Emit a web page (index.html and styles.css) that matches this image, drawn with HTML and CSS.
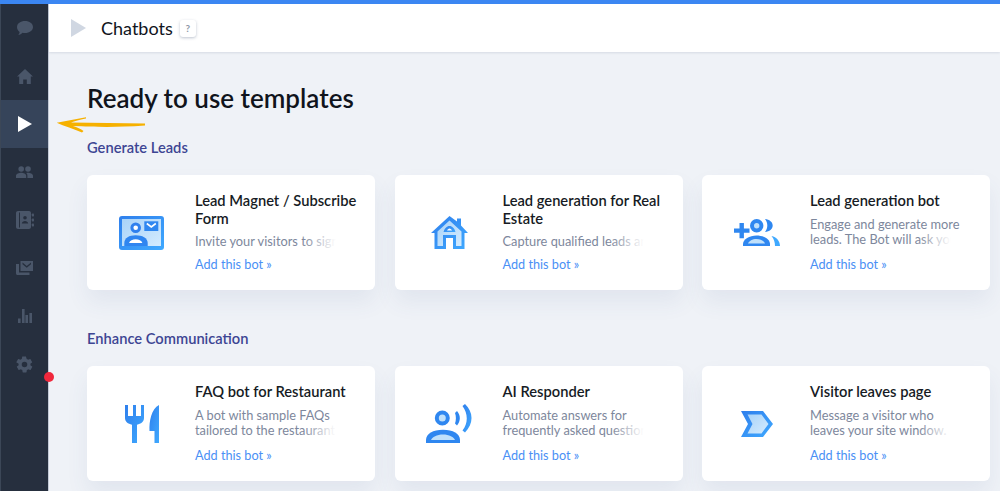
FILE: index.html
```html
<!DOCTYPE html>
<html lang="en">
<head>
    <meta charset="UTF-8">
    <meta name="viewport" content="width=device-width, initial-scale=1.0">
    <title>Chatbots</title>
    <link rel="stylesheet" href="styles.css">
</head>
<body>
    <svg width="0" height="0" class="defs">
        <defs>
            <linearGradient id="blue" x1="0" y1="0" x2="1" y2="1">
                <stop offset="0" stop-color="#2f7fec"/>
                <stop offset="1" stop-color="#3fa9ff"/>
            </linearGradient>
            <linearGradient id="pale" x1="0" y1="0" x2="1" y2="1">
                <stop offset="0" stop-color="#a9d3f8"/>
                <stop offset="1" stop-color="#d3ebff"/>
            </linearGradient>
        </defs>
    </svg>

    <div class="app">
        <nav class="sidebar">
            <a class="nav-item">
                <svg width="16" height="14" viewBox="0 0 16 14"><path d="M8 0c4.400 0 8 2.500 8 6s-3.600 6-8 6c-.9 0-1.700-.1-2.500-.3C4.500 12.800 3 13.700 1.200 14c.7-.8 1.300-1.900 1.400-3.100C1 9.800 0 8 0 6c0-3.500 3.600-6 8-6z"/></svg>
            </a>
            <a class="nav-item">
                <svg width="16" height="15" viewBox="0 0 16 15"><path d="M8 0l8 7.400h-2.200V15H9.800v-4.600H6.200V15H2.200V7.400H0z"/></svg>
            </a>
            <a class="nav-item active">
                <svg width="14" height="16" viewBox="0 0 14 16"><path d="M0 0l14 8L0 16z"/></svg>
            </a>
            <a class="nav-item">
                <svg width="17" height="12" viewBox="0 0 17 12"><circle cx="5.200" cy="3" r="2.800"/><circle cx="12" cy="3" r="2.800"/><path d="M0 12V9.800C0 7.800 3 6.800 5.200 6.800s5 1 5 3V12zM11.400 12V9.400c0-1-.4-1.900-1.200-2.500.6-.1 1.200-.2 1.800-.2 2.100 0 5 1 5 3V12z"/></svg>
            </a>
            <a class="nav-item">
                <svg width="18" height="18" viewBox="0 0 18 18"><path fill-rule="evenodd" d="M2 0h11c1.100 0 2 .9 2 2v14c0 1.100-.9 2-2 2H2c-1.100 0-2-.9-2-2V2C0 .9.900 0 2 0zm1 1.500v15h1v-15zM9 5a1.800 1.800 0 100 3.600A1.800 1.800 0 009 5zm-3.200 7.500h6.400c0-1.500-1.900-2.400-3.200-2.400s-3.200.9-3.200 2.400z"/><rect x="15.800" y="2.500" width="2.200" height="3" rx=".8"/><rect x="15.800" y="7.500" width="2.200" height="3" rx=".8"/><rect x="15.800" y="12.500" width="2.200" height="3" rx=".8"/></svg>
            </a>
            <a class="nav-item">
                <svg width="17" height="14" viewBox="0 0 17 14"><path fill-rule="evenodd" d="M4.500 0H17v10H4.500zM6.500 1.500l4.250 3.500L15 1.500v1.800L10.750 6.800 6.500 3.300z"/><path d="M0 3h3v8.500h10.500V14H1.500C.7 14 0 13.300 0 12.500z"/></svg>
            </a>
            <a class="nav-item">
                <svg width="14" height="14" viewBox="0 0 14 14"><rect x="0" y="9.500" width="2.600" height="4.500"/><rect x="4" y="0" width="2.600" height="14"/><rect x="7.400" y="6" width="2.600" height="8"/><rect x="11.400" y="4" width="2.600" height="10"/></svg>
            </a>
            <a class="nav-item">
                <svg width="19" height="19" viewBox="0 0 24 24"><path d="M19.400 13c.1-.3.100-.7.100-1s0-.7-.1-1l2.100-1.600c.2-.2.200-.4.100-.6l-2-3.500c-.1-.2-.4-.3-.6-.2l-2.500 1c-.5-.4-1.100-.7-1.700-1L14 2.400c0-.2-.2-.4-.5-.4h-4c-.2 0-.4.200-.5.400l-.4 2.700c-.6.200-1.200.6-1.700 1l-2.500-1c-.2-.1-.5 0-.6.200l-2 3.500c-.1.200-.1.500.1.600L4.600 11c0 .3-.1.700-.1 1s0 .7.1 1l-2.100 1.600c-.2.200-.2.400-.1.600l2 3.500c.1.200.4.300.6.200l2.500-1c.5.400 1.100.7 1.700 1l.4 2.700c0 .2.200.4.500.4h4c.2 0 .4-.2.500-.4l.4-2.700c.6-.2 1.200-.6 1.700-1l2.500 1c.2.100.5 0 .6-.2l2-3.500c.1-.2.100-.5-.1-.6zM12 15.500a3.500 3.500 0 110-7 3.500 3.500 0 010 7z"/></svg>
            </a>
        </nav>

        <div class="page">
            <header class="topbar">
                <svg class="topbar-icon" width="15" height="18" viewBox="0 0 15 18"><path d="M0 0l15 9L0 18z"/></svg>
                <span class="topbar-title">Chatbots</span>
                <span class="help">?</span>
            </header>

            <main class="content">
                <h1>Ready to use templates</h1>

                <h2>Generate Leads</h2>
                <div class="cards">
                    <div class="card">
                        <div class="card-icon">
                            <svg width="45" height="34" viewBox="0 0 45 34">
                                <rect width="45" height="34" rx="3" fill="url(#blue)"/>
                                <rect x="3" y="3" width="39" height="27" fill="url(#pale)"/>
                                <circle cx="16.700" cy="11.700" r="3.800" fill="#fff" stroke="#2f80ee" stroke-width="3"/>
                                <path d="M5.300 30v-3c0-5 5-7.700 11.400-7.700S28.700 22 28.700 27v3z" fill="#2f85f0"/>
                                <path d="M10 27c1-2.500 3.500-3.700 6.700-3.700s5.700 1.200 6.700 3.700z" fill="#fff"/>
                                <rect x="25.300" y="5.300" width="14" height="9.700" fill="#2f87f0"/>
                                <path d="M27.800 7.500l4.500 3.500 4.500-3.500" fill="none" stroke="#fff" stroke-width="1.600"/>
                            </svg>
                        </div>
                        <div class="card-body">
                            <h3>Lead Magnet / Subscribe Form</h3>
                            <p class="desc desc-short">Invite your visitors to sign</p>
                            <a class="add-link">Add this bot »</a>
                        </div>
                    </div>
                    <div class="card">
                        <div class="card-icon">
                            <svg width="37" height="33" viewBox="0 0 37 33">
                                <path d="M18.500 0L26 5.500V2.500h4v7L37 17h-3.500v16H22V22h-7v11H3.500V17H0z" fill="url(#blue)"/>
                                <path d="M18.500 4.500L6.500 15.500V30h5.500V19h13v11h5.500V15.500z" fill="url(#pale)"/>
                                <path d="M12.500 16c1-3.500 3.300-6 6-6s5 2.500 6 6z" fill="url(#blue)"/>
                                <path d="M16 14.500c.5-1 1.500-2 2.500-2s2 1 2.500 2z" fill="#fff"/>
                            </svg>
                        </div>
                        <div class="card-body">
                            <h3>Lead generation for Real Estate</h3>
                            <p class="desc desc-short">Capture qualified leads and</p>
                            <a class="add-link">Add this bot »</a>
                        </div>
                    </div>
                    <div class="card">
                        <div class="card-icon">
                            <svg width="46" height="27" viewBox="0 0 46 27">
                                <path d="M5.500 4h4.400v5.500h5.600v4.300H9.900v5.500H5.500v-5.500H0V9.500h5.500z" fill="#2f87f0"/>
                                <circle cx="22.700" cy="6.700" r="4.700" fill="#bfe0fb" stroke="#2f87f0" stroke-width="4"/>
                                <path d="M31 0c4.500 .5 7.700 3 7.700 6.500S35.500 12.500 31 13c1.500-2 2.300-4 2.300-6.500S32.500 2 31 0z" fill="#2f87f0"/>
                                <path d="M9 27v-2c0-5 6.500-8.600 13.500-8.600S36 20 36 25v2z" fill="#2f87f0"/>
                                <path d="M14 24.500c1-2.700 4.500-4.500 8.500-4.500s7.500 1.800 8.500 4.500z" fill="#bfe0fb"/>
                                <path d="M37.500 17c5 1 8.500 5 8.500 10h-5c0-4-1-7-3.500-10z" fill="#3fa9ff"/>
                            </svg>
                        </div>
                        <div class="card-body">
                            <h3>Lead generation bot</h3>
                            <p class="desc">Engage and generate more leads. The Bot will ask your</p>
                            <a class="add-link">Add this bot »</a>
                        </div>
                    </div>
                </div>

                <h2>Enhance Communication</h2>
                <div class="cards">
                    <div class="card">
                        <div class="card-icon">
                            <svg width="34" height="38" viewBox="0 0 34 38">
                                <path d="M0 0h3v11h5V0h3v11h5V0h3v13c0 3.500-3 6-7 6.700V38H7V19.700C3 19 0 16.500 0 13z" fill="url(#blue)"/>
                                <path d="M34 0v38h-4.500V26H24.500C24 16 26.500 4 34 0z" fill="url(#blue)"/>
                            </svg>
                        </div>
                        <div class="card-body">
                            <h3>FAQ bot for Restaurant</h3>
                            <p class="desc">A bot with sample FAQs tailored to the restaurant</p>
                            <a class="add-link">Add this bot »</a>
                        </div>
                    </div>
                    <div class="card">
                        <div class="card-icon">
                            <svg width="46" height="39" viewBox="0 0 46 39">
                                <circle cx="16.300" cy="14" r="5.500" fill="#bfe0fb" stroke="#2f87f0" stroke-width="4"/>
                                <path d="M0 39v-3c0-6.500 7-10.300 17-10.300S34 29.500 34 36v3z" fill="#2f87f0"/>
                                <path d="M5 36c1-3 6-5.500 12-5.500S28 33 29 36z" fill="#bfe0fb"/>
                                <path d="M31 7c3.800 4.200 3.800 10 0 14.500l-2-2c1.200-3 1.200-7.500 0-10.500z" fill="#2f87f0"/>
                                <path d="M39 0c8.700 8 8.700 20 0 28.500l-2.500-2c5.700-7 5.700-17 0-24.500z" fill="url(#blue)"/>
                            </svg>
                        </div>
                        <div class="card-body">
                            <h3>AI Responder</h3>
                            <p class="desc">Automate answers for frequently asked questions</p>
                            <a class="add-link">Add this bot »</a>
                        </div>
                    </div>
                    <div class="card">
                        <div class="card-icon">
                            <svg width="32" height="26" viewBox="0 0 32 26">
                                <path d="M0 0h22l10 13-10 13H0l7-13z" fill="url(#blue)"/>
                                <path d="M6.500 3.500H20.500l7 9.500-7 9.500H6.500l5-9.500z" fill="url(#pale)"/>
                            </svg>
                        </div>
                        <div class="card-body">
                            <h3>Visitor leaves page</h3>
                            <p class="desc">Message a visitor who leaves your site window.</p>
                            <a class="add-link">Add this bot »</a>
                        </div>
                    </div>
                </div>
            </main>
        </div>
    </div>

    <!-- annotations drawn over the screenshot -->
    <svg class="arrow" width="92" height="18" viewBox="0 0 92 18">
        <path d="M.7 6.700L30 1.300v1.200C23 4 19 5 15 6.500l74 1v2C60 11.500 40 11 17 10c4 1 8 3 10.500 5L26 16.500C18 13 8 10 .7 6.700z"/>
    </svg>
    <span class="red-dot"></span>
</body>
</html>
```

FILE: styles.css
```css
* {
    box-sizing: border-box;
}

html, body {
    height: 100%;
}

body {
    margin: 0;
    font-family: 'Lato', sans-serif;
    background-color: #eff2f7;
    color: #10141c;
    overflow: hidden;
    border-top: 4px solid #3b86f2;
}

.defs {
    position: absolute;
}

.app {
    display: flex;
    height: 100%;
}

.sidebar {
    flex: 0 0 49px;
    background-color: #262f3e;
    border-left: 1px solid #3c4757;
    border-right: 1px solid #c3cad6;
}

.nav-item {
    display: flex;
    align-items: center;
    justify-content: center;
    height: 48px;
}

.nav-item svg {
    fill: #4a5669;
}

.nav-item.active {
    background-color: #36445a;
}

.nav-item.active svg {
    fill: #ffffff;
}

.page {
    flex: 1;
    min-width: 0;
}

.topbar {
    display: flex;
    align-items: center;
    height: 48px;
    padding-left: 22px;
    background-color: #ffffff;
    box-shadow: 0 1px 2px rgba(40, 60, 100, 0.12);
}

.topbar-icon {
    fill: #d0d7e2;
}

.topbar-title {
    margin-left: 15px;
    font-size: 18px;
}

.help {
    display: flex;
    align-items: center;
    justify-content: center;
    width: 16px;
    height: 17px;
    margin-left: 7px;
    font-size: 10px;
    font-weight: 700;
    color: #8e98a8;
    background-color: #ffffff;
    border-radius: 3px;
    box-shadow: 0 1px 3px rgba(40, 60, 100, 0.3);
}

.content {
    padding: 29px 10px 0 38px;
}

h1 {
    margin: 0;
    font-size: 26px;
    line-height: 34px;
    font-weight: 600;
}

h2 {
    margin: 23px 0 19px;
    font-size: 14.7px;
    line-height: 18px;
    font-weight: 600;
    color: #3d4593;
}

.cards + h2 {
    margin-top: 39px;
}

.cards {
    display: grid;
    grid-template-columns: repeat(3, 288px);
    column-gap: 19.5px;
}

.card {
    display: flex;
    height: 115px;
    background-color: #ffffff;
    border-radius: 6px;
    box-shadow: 0 12px 22px rgba(70, 90, 140, 0.08);
}

.card-icon {
    display: flex;
    flex: 0 0 108px;
    align-items: center;
    justify-content: center;
    padding-left: 1px;
}

.card-body {
    width: 162px;
    padding-top: 16px;
}

h3 {
    margin: 0 0 8px;
    font-size: 14.7px;
    line-height: 18px;
    font-weight: 600;
    color: #161b24;
}

.desc {
    position: relative;
    width: 155px;
    height: 30px;
    margin: 0;
    font-size: 12.8px;
    line-height: 15px;
    color: #7d879c;
}

.desc-short {
    height: 15px;
    margin-top: -1px;
}

/* fade out the end of the last line */
.desc::after {
    content: "";
    position: absolute;
    left: 108px;
    right: 0;
    bottom: 0;
    height: 15px;
    background: linear-gradient(to right, rgba(255, 255, 255, 0), #ffffff 70%);
}

.add-link {
    display: block;
    margin-top: 10px;
    font-size: 12.7px;
    line-height: 15px;
    color: #4a90f5;
}

.desc-short + .add-link {
    margin-top: 8px;
}

/* annotations */
.arrow {
    position: absolute;
    left: 56px;
    top: 116px;
    fill: #f6b100;
}

.red-dot {
    position: absolute;
    left: 44px;
    top: 372px;
    width: 10px;
    height: 10px;
    background-color: #f0283c;
    border-radius: 50%;
}
```
